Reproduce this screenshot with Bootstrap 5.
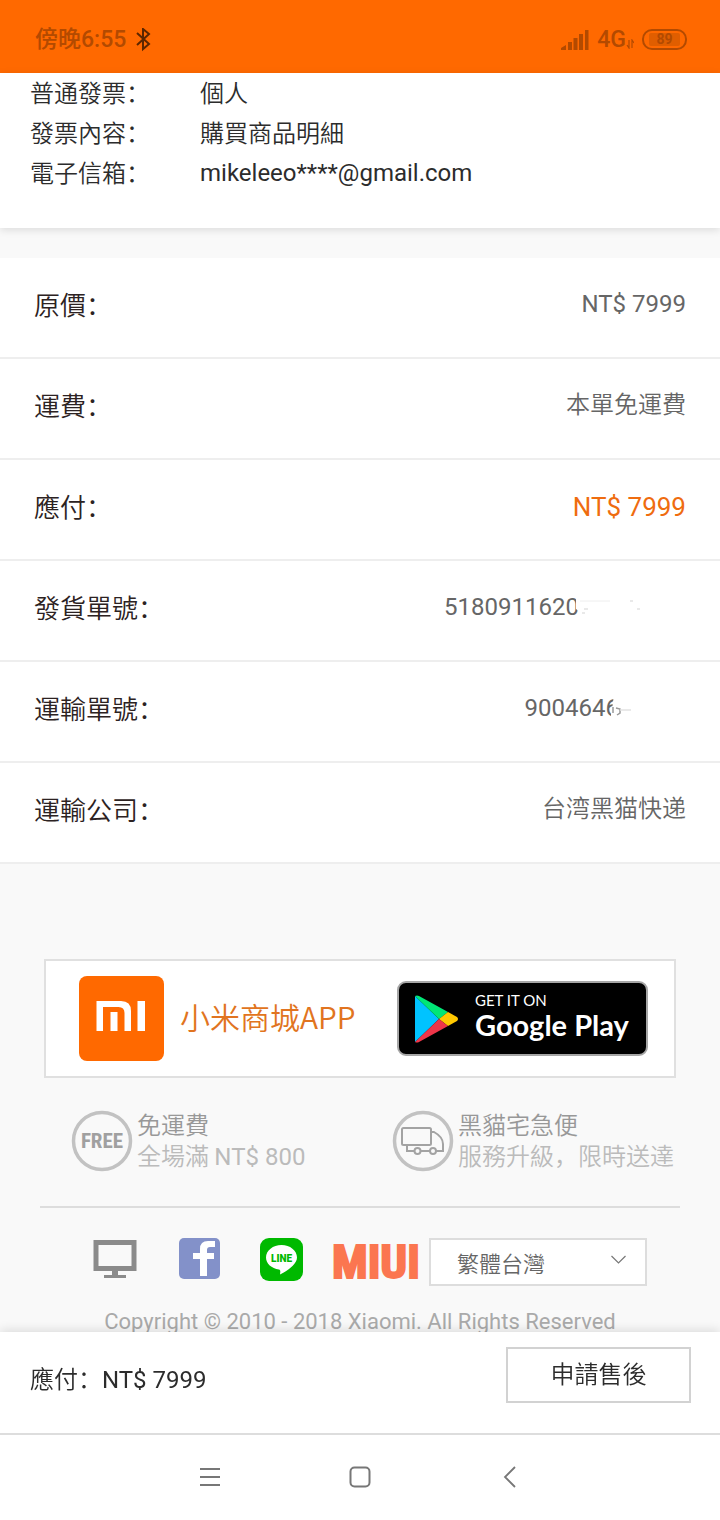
<!DOCTYPE html>
<html lang="zh-Hans">
<head>
<meta charset="utf-8">
<meta name="viewport" content="width=device-width, initial-scale=1">
<title>訂單詳情</title>
<link rel="stylesheet" href="https://cdn.jsdelivr.net/npm/bootstrap@5.3.0/dist/css/bootstrap.min.css">
<style>
  body { background: #f9f9f9; color: #2c2c2c; font-family: Roboto, "Noto Sans CJK SC", sans-serif; font-size: 24px; line-height: 40px; }
  .cjk { font-family: "Noto Sans CJK SC", sans-serif; font-weight: 350; }
  .roboto { font-family: Roboto, sans-serif; font-weight: 400; line-height: 1; }
  .status-bar { background: #ff6900; color: #b34a00; height: 73px; padding: 6px 33px 0 35px; font-size: 23px; font-weight: 500; }
  .battery { border: 2px solid #b34a00; border-radius: 10px; padding: 2px 5px; }
  .battery span { display: block; background: #e05e00; border-radius: 2px; font-size: 14px; line-height: 13px; font-weight: 700; width: 31px; text-align: center; }
  .invoice { padding: 0 30px 35px; box-shadow: 0 2px 8px rgba(0,0,0,.12); }
  .invoice dt { width: 170px; }
  .invoice .cjk { line-height: 38px; }
  .invoice > div { height: 40px; }
  .charges { margin-top: 30px; }
  .charges li { min-height: 101px; padding: 26px 34px 0 34px; border-bottom: 2px solid #eee; }
  .charges .term { font-size: 26px; line-height: 40px; color: #2c2222; }
  .charges .amount { color: #666; line-height: 40px; }
  .charges .amount.cjk { line-height: 36px; }
  .charges .due { color: #ef6c0f; font-size: 26px; line-height: 42px; }
  .smudge { margin-left: -8px; }
  .site-footer { padding: 95px 40px 100px; }
  .app-box { margin: 0 4px; height: 119px; border: 2px solid #e0e0e0; padding: 0 26px 0 33px; color: #e17420; font-size: 30px; }
  .app-name { padding-bottom: 6px; }
  .play { background: #000; border: 2px solid #a6a6a6; border-radius: 9px; width: 251px; height: 75px; padding-left: 15px; color: #fff; font-family: Lato, sans-serif; }
  .play .over { font-size: 15px; line-height: 16px; }
  .play .name { font-size: 29px; line-height: 34px; font-weight: 700; }
  .play .words { padding-bottom: 4px; }
  .perks { padding: 32px 0 34px 31px; line-height: 31px; color: #989898; border-bottom: 2px solid #ddd; }
  .perks .sub { color: #bbb; }
  .perk-words { margin-top: -2px; }
  .perk { width: 321px; }
  .perk-last { width: auto; }
  .links { margin: 30px 33px 18px 52px; }
  .links a { display: block; }
  .links .fb { margin-left: 41px; }
  .links .ln { margin-left: 39px; }
  .links .miui { margin-left: 29px; color: #fb7650; text-decoration: none; font: 700 47px/48px "Roboto Condensed", "Liberation Sans Narrow", sans-serif; -webkit-text-stroke: 2px #fb7650; }
  .links select { width: 218px; height: 48px; border: 2px solid #ddd; border-radius: 0; font-size: 22px; color: #666; padding: 0 26px; background-color: #fff;
    background-image: url("data:image/svg+xml,%3Csvg xmlns='http://www.w3.org/2000/svg' viewBox='0 0 16 16'%3E%3Cpath d='M1 4l7 7 7-7' fill='none' stroke='%23777' stroke-width='1.2'/%3E%3C/svg%3E");
    background-size: 17px 16px; background-position: right 18px top 12px; font-family: "Noto Sans CJK SC", sans-serif; font-weight: 350; }
  .copy { color: #aaa; font-size: 22px; line-height: 36px; }
  .pay-bar { height: 101px; padding: 15px 29px 0 30px; box-shadow: 0 -2px 10px rgba(0,0,0,.12); }
  .pay-bar .btn { width: 185px; height: 56px; border: 2px solid #d2d2d2; border-radius: 0; font-size: 24px; padding: 0 0 4px; color: #2c2c2c; }
  .sum { padding-top: 11px; }
  .keys { height: 87px; border-top: 2px solid #ddd; padding-bottom: 2px; }
  .keys button { width: 40px; height: 40px; }
  .key-home { margin: 0 110px; }
</style>
</head>
<body>
<header class="status-bar d-flex align-items-center">
  <span>傍晚6:55</span>
  <svg class="ms-2" width="20" height="24" viewBox="0 0 20 24" fill="none" stroke="#5c2600" stroke-width="2"><path d="M3 5l12 11-6 5V1l6 5L3 17"/></svg>
  <svg class="ms-auto me-2" width="28" height="20" viewBox="0 0 28 20" fill="#b34a00"><path d="M0 20v-2l5-3v5zM7 12h4v8H7zM12.500 8h4v12h-4zM18 4h4v16h-4zM24 0h3.500v20H24z"/></svg>
  <span>4G</span>
  <svg class="me-2 mt-2" width="8" height="10" viewBox="0 0 8 10" fill="none" stroke="#b34a00" stroke-width="1.200"><path d="M3 1v8L1 6M6 9V1l2 3"/></svg>
  <div class="battery"><span>89</span></div>
</header>

<main>
  <dl class="invoice bg-white mb-0">
    <div class="d-flex"><dt class="cjk">普通發票：</dt><dd class="cjk mb-0">個人</dd></div>
    <div class="d-flex"><dt class="cjk">發票內容：</dt><dd class="cjk mb-0">購買商品明細</dd></div>
    <div class="d-flex"><dt class="cjk">電子信箱：</dt><dd class="mb-0">mikeleeo****@gmail.com</dd></div>
  </dl>

  <ul class="charges list-unstyled bg-white mb-0">
    <li class="d-flex justify-content-between"><span class="term cjk">原價：</span><span class="amount">NT$ 7999</span></li>
    <li class="d-flex justify-content-between"><span class="term cjk">運費：</span><span class="amount cjk">本單免運費</span></li>
    <li class="d-flex justify-content-between"><span class="term cjk">應付：</span><span class="amount due">NT$ 7999</span></li>
    <li class="d-flex justify-content-between"><span class="term cjk">發貨單號：</span>
      <span class="amount d-flex">5180911620<svg class="smudge" width="115" height="40" viewBox="0 0 115 40"><path d="M5 8h110v26H11l-1-8-5-4z" fill="#fff"/><path d="M9 14h30" stroke="#eee"/><path d="M13 22h4M11 26h3M59 14h3M66 22h3" stroke="#e2e2e2" stroke-width="1.500"/></svg></span></li>
    <li class="d-flex justify-content-between"><span class="term cjk">運輸單號：</span>
      <span class="amount d-flex">9004646<svg class="smudge" width="75" height="40" viewBox="0 0 75 40"><path d="M3 6h72v28H-2v-6l3-6z" fill="#fff"/><path d="M2 19v6M5 20l4 1v4l-3 2" fill="none" stroke="#999" stroke-width="1.500"/><path d="M9 22h11" stroke="#e2e2e2" stroke-width="1.500"/></svg></span></li>
    <li class="d-flex justify-content-between"><span class="term cjk">運輸公司：</span><span class="amount cjk">台湾黑猫快递</span></li>
  </ul>
</main>

<footer class="site-footer">
  <div class="app-box bg-white d-flex align-items-center">
    <svg width="85" height="85" viewBox="0 0 85 85" aria-label="Mi"><rect width="85" height="85" rx="8" fill="#ff6900"/><path d="M17.500 25H42q10 0 10 10v20h-6.500V37q0-6-6-6H24v24h-6.500zM31.500 36h7v19h-7zM58.500 25H66v30h-7.500z" fill="#fff"/></svg>
    <span class="app-name cjk ms-3">小米商城APP</span>
    <a href="#" class="play ms-auto d-flex align-items-center text-decoration-none">
      <svg width="45" height="48" viewBox="0 0 45 48"><path d="M1 1v46l24-23z" fill="#00c3ff"/><path d="M1 1q2-1 4 0l29 16-9 7z" fill="#00e676"/><path d="M34 17l9 5q2 2 0 4l-9 5-9-7z" fill="#ffc800"/><path d="M1 47q2 1 4 0l29-16-9-7z" fill="#ee3549"/></svg>
      <span class="words d-flex flex-column ms-3"><span class="over">GET IT ON</span><span class="name">Google Play</span></span>
    </a>
  </div>

  <div class="perks d-flex cjk">
    <div class="perk d-flex align-items-start">
      <svg width="62" height="62" viewBox="0 0 62 62"><circle cx="31" cy="31" r="28.500" fill="none" stroke="#c2c2c2" stroke-width="3.500"/><text x="31" y="38" text-anchor="middle" font-family="Roboto Condensed, Roboto, sans-serif" font-weight="700" font-size="21" fill="#a0a0a0">FREE</text></svg>
      <div class="perk-words ms-1"><div>免運費</div><div class="sub">全場滿 <span class="roboto">NT$ 800</span></div></div>
    </div>
    <div class="perk perk-last d-flex align-items-start">
      <svg width="62" height="62" viewBox="0 0 62 62" fill="none"><circle cx="31" cy="31" r="28.500" stroke="#c2c2c2" stroke-width="3.500"/><g stroke="#a3a3a3" stroke-width="2"><rect x="10" y="18" width="29" height="17" rx="1.500"/><path d="M39 22h3q9 5 9 12v7h-7M15 35v6h7M29 41h9"/><circle cx="25.500" cy="41" r="3"/><circle cx="41" cy="41" r="3"/></g></svg>
      <div class="perk-words ms-1 text-nowrap"><div>黑貓宅急便</div><div class="sub">服務升級，限時送達</div></div>
    </div>
  </div>

  <div class="links d-flex align-items-start">
    <a href="#" aria-label="電腦版"><svg class="d-block" width="46" height="42" viewBox="0 0 46 42"><path d="M4 4.500h38v26H4z" fill="none" stroke="#8b8b8b" stroke-width="5"/><path d="M20 33h6v4h8v3H12v-3h8z" fill="#8b8b8b"/></svg></a>
    <a href="#" aria-label="Facebook" class="fb"><svg class="d-block" width="42" height="42" viewBox="0 0 42 42"><rect width="41" height="41" rx="5" fill="#8391c9"/><path d="M21 38V21h-7v-6h7v-4q0-8 8-8h7v6h-5q-3 0-3 3v3h7v6h-7v17z" fill="#fff"/></svg></a>
    <a href="#" aria-label="LINE" class="ln"><svg class="d-block" width="43" height="43" viewBox="0 0 43 43"><rect width="43" height="43" rx="9" fill="#00b900"/><path d="M21.500 7C13 7 6 12.500 6 19.500c0 6 5.500 11 13 12 1.500.5 1.500 1.500 1 5 4-2 17-9 17-17C37 12.500 30 7 21.500 7z" fill="#fff"/><text x="21.500" y="24" text-anchor="middle" font-family="Roboto, sans-serif" font-weight="900" font-size="10" fill="#00b900">LINE</text></svg></a>
    <a href="#" class="miui">MIUI</a>
    <select class="form-select ms-auto" aria-label="語言"><option>繁體台灣</option></select>
  </div>
  <p class="copy text-center mb-0">Copyright © 2010 - 2018 Xiaomi. All Rights Reserved</p>
</footer>

<div class="fixed-bottom">
  <div class="pay-bar bg-white d-flex justify-content-between align-items-start">
    <div class="sum"><span class="cjk">應付：</span>NT$ 7999</div>
    <button type="button" class="btn cjk">申請售後</button>
  </div>
  <nav class="keys bg-white d-flex justify-content-center align-items-center" aria-label="系統按鍵">
    <button type="button" class="btn p-0 border-0 d-flex align-items-center justify-content-center" aria-label="選單"><svg width="22" height="20" viewBox="0 0 22 20" stroke="#777" stroke-width="1.800"><path d="M1 2h20M1 10h20M1 18h20"/></svg></button>
    <button type="button" class="btn p-0 border-0 d-flex align-items-center justify-content-center key-home" aria-label="主畫面"><svg width="22" height="22" viewBox="0 0 22 22" fill="none" stroke="#777" stroke-width="2"><rect x="1.500" y="1.500" width="19" height="19" rx="4"/></svg></button>
    <button type="button" class="btn p-0 border-0 d-flex align-items-center justify-content-center" aria-label="返回"><svg width="14" height="22" viewBox="0 0 14 22" fill="none" stroke="#777" stroke-width="1.800"><path d="M12 1L2 11l10 10"/></svg></button>
  </nav>
</div>
<script src="https://cdn.jsdelivr.net/npm/bootstrap@5.3.0/dist/js/bootstrap.bundle.min.js"></script>
</body>
</html>
